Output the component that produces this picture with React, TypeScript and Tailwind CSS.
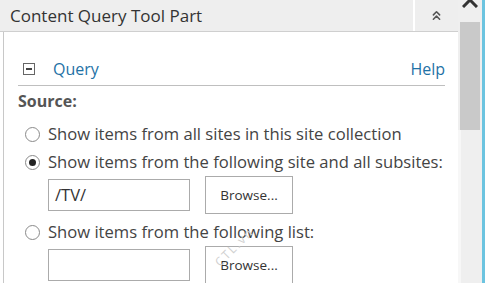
import { ChevronsUp } from 'lucide-react';

function Radio({ checked }: { checked?: boolean }) {
  return (
    <span className="flex h-[15px] w-[15px] shrink-0 items-center justify-center rounded-full border border-[#8a8a8a] bg-white">
      {checked && <span className="h-[7px] w-[7px] rounded-full bg-[#222]" />}
    </span>
  );
}

function PathRow({ value }: { value?: string }) {
  return (
    <div className="ml-[44px] flex items-center gap-[15px]">
      <div className="flex h-[32px] w-[142px] items-center border border-[#ababab] bg-white px-[6px] text-[16.5px] text-[#333]">
        {value}
      </div>
      <button className="h-[38px] w-[88px] border border-[#ababab] bg-white text-[13.5px] text-[#333]">
        Browse...
      </button>
    </div>
  );
}

function Option({ checked, label }: { checked?: boolean; label: string }) {
  return (
    <div className="flex h-[28px] items-center gap-[8px] pl-[21px] text-[16.6px] text-[#444]">
      <Radio checked={checked} />
      <span>{label}</span>
    </div>
  );
}

export default function App() {
  return (
    <div
      className="relative flex h-[283px] w-[485px] overflow-hidden bg-white"
      style={{ fontFamily: '"Open Sans", "Noto Sans", sans-serif' }}
    >
      <div className="flex w-[458px] flex-col">
        {/* Header */}
        <div className="flex h-[32px] shrink-0 items-stretch border-b border-[#cfcfcf] bg-[#eeeeee]">
          <div className="flex flex-1 items-center pl-[10px] text-[17px] text-[#333]">
            Content Query Tool Part
          </div>
          <div className="flex w-[45px] items-center justify-center border-l-2 border-white">
            <ChevronsUp className="h-[15px] w-[15px] text-[#555]" strokeWidth={2.5} />
          </div>
        </div>

        {/* Body */}
        <div className="ml-[3px] flex flex-1 flex-col border-l border-[#c8c8c8] bg-white pr-[13px]">
          <div className="ml-[14px] mt-[22px] flex h-[32px] items-center justify-between border-b border-[#bfbfbf] pb-[2px]">
            <div className="flex items-center gap-[18px] pl-[5px]">
              <span className="flex h-[12px] w-[12px] items-center justify-center border border-[#666]">
                <span className="h-[2px] w-[6px] bg-[#444]" />
              </span>
              <span className="text-[16px] text-[#1f72a6]">Query</span>
            </div>
            <span className="text-[16px] text-[#1f72a6]">Help</span>
          </div>
          <div className="ml-[14px] mt-[3px] h-[24px] text-[16px] font-bold text-[#555]">Source:</div>
          <div className="mt-[7px]">
            <Option label="Show items from all sites in this site collection" />
            <Option checked label="Show items from the following site and all subsites:" />
          </div>
          <PathRow value="/TV/" />
          <div className="mt-[4px]">
            <Option label="Show items from the following list:" />
          </div>
          <PathRow />
        </div>
      </div>

      {/* Scrollbar */}
      <div className="relative flex w-[24px] flex-col bg-[#efefef]">
        <div className="flex h-[22px] items-start justify-center">
          <svg width="16" height="9" viewBox="0 0 16 9" className="-mt-[1px]">
            <path d="M1 8 L8 1 L15 8" fill="none" stroke="#333" strokeWidth="3" />
          </svg>
        </div>
        <div className="mx-[2px] h-[108px] bg-[#c9c9c9]" />
        <div className="flex-1 border-l-[3px] border-[#f7f7f7]" />
      </div>
      <div className="w-[3px] bg-[#6cc4e0]" />

      {/* watermark */}
      <span className="pointer-events-none absolute left-[210px] top-[238px] -rotate-45 text-[12px] tracking-[2px] text-[#d0d0d0]">
        CTL.vn
      </span>
    </div>
  );
}
